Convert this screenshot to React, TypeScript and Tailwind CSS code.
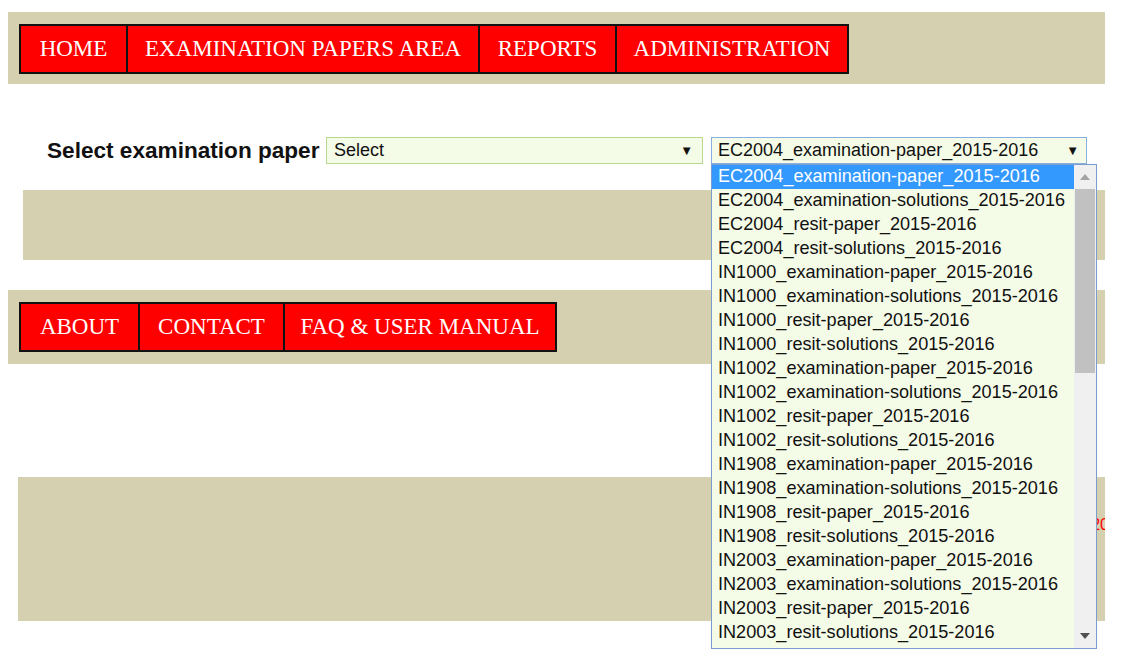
const papers = [
  "EC2004_examination-paper_2015-2016",
  "EC2004_examination-solutions_2015-2016",
  "EC2004_resit-paper_2015-2016",
  "EC2004_resit-solutions_2015-2016",
  "IN1000_examination-paper_2015-2016",
  "IN1000_examination-solutions_2015-2016",
  "IN1000_resit-paper_2015-2016",
  "IN1000_resit-solutions_2015-2016",
  "IN1002_examination-paper_2015-2016",
  "IN1002_examination-solutions_2015-2016",
  "IN1002_resit-paper_2015-2016",
  "IN1002_resit-solutions_2015-2016",
  "IN1908_examination-paper_2015-2016",
  "IN1908_examination-solutions_2015-2016",
  "IN1908_resit-paper_2015-2016",
  "IN1908_resit-solutions_2015-2016",
  "IN2003_examination-paper_2015-2016",
  "IN2003_examination-solutions_2015-2016",
  "IN2003_resit-paper_2015-2016",
  "IN2003_resit-solutions_2015-2016",
];

function NavBar({ items, h }: { items: { label: string; w: string }[]; h: string }) {
  return (
    <div className={"ml-[8px] w-[1097px] bg-[#d5d0b0] pt-[12px] pl-[11px] " + h}>
      <div className="flex w-fit border-2 border-[#111] bg-[#ff0000]">
        {items.map((it, i) => (
          <a
            key={it.label}
            className={
              "flex h-[46px] items-center justify-center text-white text-[23px] font-['Liberation_Serif',serif] " +
              it.w +
              (i > 0 ? " border-l-2 border-[#111]" : "")
            }
          >
            {it.label}
          </a>
        ))}
      </div>
    </div>
  );
}

function Arrow() {
  return <span className="text-[13px] leading-none text-[#111]">▼</span>;
}

export default function App() {
  return (
    <div className="relative w-[1124px] h-[671px] overflow-hidden bg-white font-['Liberation_Sans',Arial,sans-serif]">
      <div className="pt-[12px]">
        <NavBar
          h="h-[72px]"
          items={[
            { label: "HOME", w: "w-[105px]" },
            { label: "EXAMINATION PAPERS AREA", w: "w-[352px]" },
            { label: "REPORTS", w: "w-[137px]" },
            { label: "ADMINISTRATION", w: "w-[232px]" },
          ]}
        />
      </div>

      <div className="mt-[53px] flex items-center pl-[47px] h-[27px]">
        <span className="text-[22.6px] font-bold text-[#111] w-[279px] whitespace-nowrap">
          Select examination paper
        </span>
        <div className="flex h-[27px] w-[377px] items-center justify-between border border-[#b9d78e] bg-[#f4fbe7] pl-[7px] pr-[9px] text-[18px] text-[#111]">
          <span>Select</span>
          <Arrow />
        </div>
        <div className="ml-[8px] flex h-[27px] w-[376px] items-center justify-between border border-[#89aee0] bg-[#f4fbe7] pl-[6px] pr-[7px] text-[18px] text-[#111]">
          <span>EC2004_examination-paper_2015-2016</span>
          <Arrow />
        </div>
      </div>

      <div className="mt-[26px] ml-[23px] w-[1082px] h-[70px] bg-[#d5d0b0]" />

      <div className="mt-[30px]">
        <NavBar
          h="h-[74px]"
          items={[
            { label: "ABOUT", w: "w-[117px]" },
            { label: "CONTACT", w: "w-[145px]" },
            { label: "FAQ & USER MANUAL", w: "w-[272px]" },
          ]}
        />
      </div>

      <div className="mt-[113px] ml-[18px] w-[1087px] h-[144px] bg-[#d5d0b0] flex justify-end overflow-hidden pt-[36px]">
        <span className="-mr-[4px] whitespace-nowrap text-[16px] text-[#ff0000]">
          2016-2020
        </span>
      </div>

      {/* open dropdown list */}
      <div className="absolute left-[711px] top-[164px] flex h-[485px] w-[386px] border border-[#7a9ccf] bg-[#f4fbe7]">
        <ul className="flex-1 overflow-hidden">
          {papers.map((p, i) => (
            <li
              key={p}
              className={
                "h-[24px] leading-[23px] pl-[6px] text-[18.1px] whitespace-nowrap " +
                (i === 0 ? "bg-[#3399ff] text-white" : "text-[#111]")
              }
            >
              {p}
            </li>
          ))}
        </ul>
        <div className="flex w-[22px] flex-col bg-[#f0f0f0]">
          <div className="flex h-[24px] items-center justify-center">
            <svg width="10" height="6" viewBox="0 0 10 6">
              <path d="M0 6 L5 0 L10 6 Z" fill="#a3a3a3" />
            </svg>
          </div>
          <div className="mx-[1px] h-[184px] bg-[#c1c1c1]" />
          <div className="flex-1" />
          <div className="flex h-[24px] items-center justify-center">
            <svg width="10" height="6" viewBox="0 0 10 6">
              <path d="M0 0 L10 0 L5 6 Z" fill="#505050" />
            </svg>
          </div>
        </div>
      </div>
    </div>
  );
}
